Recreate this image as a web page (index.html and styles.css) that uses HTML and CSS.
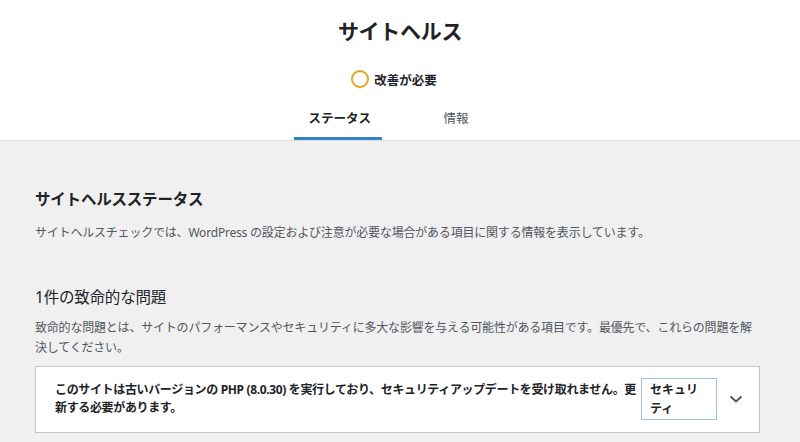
FILE: index.html
```html
<!DOCTYPE html>
<html lang="ja">
<head>
    <meta charset="UTF-8">
    <title>サイトヘルス</title>
    <link rel="stylesheet" href="styles.css">
</head>
<body>
<div class="header">
    <h1 class="title">サイトヘルス</h1>
    <div class="status">
        <span class="status-circle"></span>
        <span class="status-text">改善が必要</span>
    </div>
    <nav class="tabs">
        <a class="tab active">ステータス</a>
        <a class="tab">情報</a>
    </nav>
</div>
<div class="body">
    <h2 class="section-title">サイトヘルスステータス</h2>
    <p class="desc">サイトヘルスチェックでは、WordPress の設定および注意が必要な場合がある項目に関する情報を表示しています。</p>

    <h3 class="issues-title">1件の致命的な問題</h3>
    <p class="desc">致命的な問題とは、サイトのパフォーマンスやセキュリティに多大な影響を与える可能性がある項目です。最優先で、これらの問題を解決してください。</p>

    <div class="issue">
        <div class="issue-text">このサイトは古いバージョンの PHP (8.0.30) を実行しており、セキュリティアップデートを受け取れません。更新する必要があります。</div>
        <span class="badge">セキュリティ</span>
        <!-- 展開用の矢印 -->
        <svg class="chevron" width="14" height="10" viewBox="0 0 14 10">
            <path d="M1.5 2.5 L7 7.5 L12.5 2.5" fill="none" stroke="#50575e" stroke-width="2"/>
        </svg>
    </div>
</div>
</body>
</html>
```
FILE: styles.css
```css
html, body, h1, h2, h3, p, div, nav, a, span {
    margin: 0;
    padding: 0;
}

body {
    background: #f0f0f1;
    color: #1d2327;
    font-family: "Noto Sans", "Noto Sans CJK JP", sans-serif;
    font-size: 12px;
}

.header {
    background: #fff;
    border-bottom: 1px solid #dcdcde;
    text-align: center;
}

.title {
    font-size: 21px;
    font-weight: 700;
    line-height: 28px;
    padding-top: 17px;
    letter-spacing: -0.3px;
}

.status {
    display: flex;
    justify-content: center;
    align-items: center;
    gap: 5px;
    margin-top: 21px;
    height: 26px;
    padding-right: 12px;
}

.status-circle {
    display: block;
    width: 14px;
    height: 14px;
    border: 2px solid #dba617;
    border-radius: 50%;
}

.status-text {
    font-size: 12.5px;
    font-weight: 700;
    color: #1d2327;
}

.tabs {
    display: flex;
    justify-content: center;
    gap: 47px;
    margin-top: 17px;
    padding-right: 23px;
}

.tab {
    display: block;
    padding: 0 14px;
    line-height: 20px;
    height: 31px;
    font-size: 12.5px;
    color: #50575e;
    white-space: nowrap;
}

.tab.active {
    width: 60px;
    font-weight: 700;
    color: #1d2327;
    box-shadow: inset 0 -3px #3582c4;
}

.body {
    padding: 46px 40px 0 35px;
}

.section-title {
    font-size: 15.5px;
    font-weight: 700;
    line-height: 24px;
    letter-spacing: -0.2px;
}

.desc {
    font-size: 12px;
    line-height: 20px;
    color: #50575e;
    letter-spacing: -0.2px;
}

.section-title + .desc {
    margin-top: 12px;
}

.issues-title {
    font-size: 15.5px;
    font-weight: 400;
    line-height: 24px;
    margin-top: 42px;
    letter-spacing: -0.2px;
}

.issues-title + .desc {
    margin-top: 9px;
}

.issue {
    display: flex;
    align-items: center;
    margin-top: 8px;
    background: #fff;
    border: 1px solid #c3c4c7;
    padding: 11px 16px 12px 19px;
}

.issue-text {
    flex: 1;
    font-size: 12px;
    font-weight: 700;
    line-height: 18px;
    letter-spacing: -0.35px;
}

.badge {
    display: block;
    width: 58px;
    margin-left: 4px;
    padding: 1px 8px;
    border: 1px solid #9ec2e6;
    font-size: 12px;
    font-weight: 700;
    line-height: 19px;
}

.chevron {
    display: block;
    margin-left: 12px;
}
```
